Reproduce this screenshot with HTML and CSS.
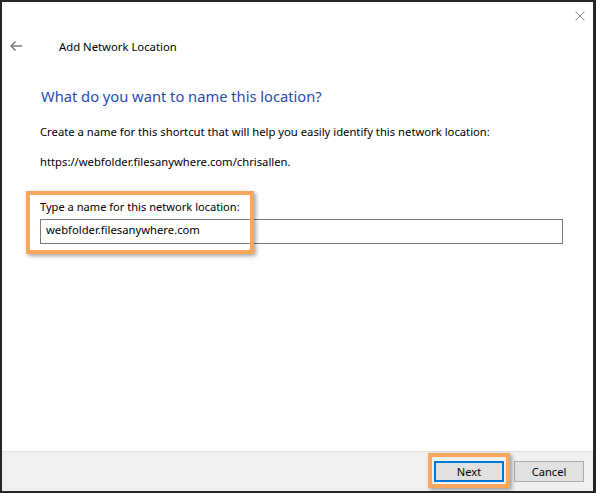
FILE: index.html
```html
<!DOCTYPE html>
<html>
<head>
<meta charset="utf-8">
<link rel="stylesheet" href="styles.css">
</head>
<body>
<div class="window">
  <div class="titlebar">
    <svg class="close" width="10" height="10" viewBox="0 0 10 10"><path d="M0.5 0.5 L9.5 9.5 M9.5 0.5 L0.5 9.5" stroke="#8a8a8a" stroke-width="1" fill="none"/></svg>
  </div>
  <div class="header">
    <svg class="back" width="12" height="10" viewBox="0 0 12 10"><path d="M5.5 0.5 L1 5 L5.5 9.5 M1 5 H12" stroke="#7a7a7a" stroke-width="1.5" fill="none"/></svg>
    <span class="title">Add Network Location</span>
  </div>
  <div class="content">
    <h1 class="heading">What do you want to name this location?</h1>
    <p class="text">Create a name for this shortcut that will help you easily identify this network location:</p>
    <p class="text url">https://webfolder.filesanywhere.com/chrisallen.</p>
    <div class="field">
      <label class="label">Type a name for this network location:</label>
      <div class="input">webfolder.filesanywhere.com</div>
      <div class="hl hl-field"></div>
    </div>
  </div>
  <div class="footer">
    <div class="btn-wrap">
      <button class="btn primary">Next</button>
      <div class="hl hl-btn"></div>
    </div>
    <button class="btn">Cancel</button>
  </div>
</div>
</body>
</html>
```
FILE: styles.css
```css
* { box-sizing: border-box; }
html, body { margin: 0; padding: 0; background: #fff; }
body { font-family: "Noto Sans", "Open Sans", sans-serif; font-size: 11.25px; color: #000; }
.window {
  width: 596px; height: 493px;
  border: 2px solid #262626; border-right-width: 3px;
  display: flex; flex-direction: column;
  background: #fff;
}
.titlebar { height: 30px; display: flex; justify-content: flex-end; align-items: flex-start; padding: 9px 8px 0 0; }
.close { display: block; }
.header { height: 28px; display: flex; align-items: center; padding-left: 8px; }
.back { display: block; }
.title { margin-left: 37px; font-size: 11.3px; line-height: 15px; }
.content { padding: 0 0 0 38px; flex: 1; }
.heading { font-weight: normal; font-size: 14.7px; line-height: 20px; color: #1f4db0; margin: 26px 0 0 1px; }
.text { margin: 18px 0 0 0; font-size: 11.25px; line-height: 15px; }
.url { margin-top: 15px; }
.field { position: relative; margin-top: 30px; width: 523px; }
.label { display: block; font-size: 11.1px; line-height: 15px; }
.input { margin-top: 5px; height: 25px; border: 1px solid #7a7a7a; padding: 2px 5px; font-size: 11.25px; line-height: 15px; }
.hl { position: absolute; border: 4px solid #f8a75f; box-shadow: 2px 2px 4px rgba(0,0,0,0.35); pointer-events: none; }
.hl-field { left: -14px; top: -8px; width: 228px; height: 63px; }
.footer { height: 40px; background: #f0f0f0; border-top: 1px solid #dfdfdf; display: flex; justify-content: flex-end; align-items: flex-start; padding: 9px 9px 0 0; gap: 10px; }
.btn-wrap { position: relative; }
.btn { display: block; width: 70px; height: 21px; margin: 0; padding: 0; font-family: inherit; font-size: 11.1px; background: #e1e1e1; border: 1px solid #adadad; color: #000; }
.btn.primary { border: 2px solid #0078d7; }
.hl-btn { left: -6px; top: -8px; width: 82px; height: 35px; }
```
